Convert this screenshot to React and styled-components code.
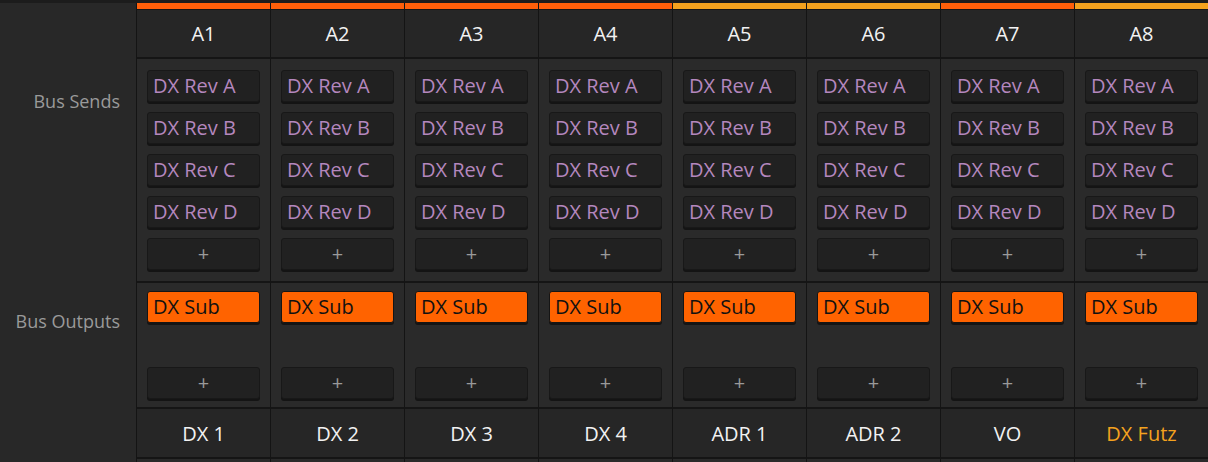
import React from "react";
import styled, { createGlobalStyle } from "styled-components";

const Global = createGlobalStyle`
  html, body { margin: 0; padding: 0; background: #282828; }
  body { font-family: "Open Sans", "Noto Sans", sans-serif; }
`;

const Page = styled.div`
  width: 1208px; height: 462px; display: flex; background: #282828; overflow: hidden;
  border-top: 3px solid #1c1c1c; box-sizing: border-box;
`;
const Labels = styled.div`
  width: 136px; flex: none; display: flex; flex-direction: column;
  border-right: 1px solid #141414;
`;
const Label = styled.div`
  text-align: right; padding-right: 16px;
  color: #9a9a9a; font-size: 18px; line-height: 24px; margin-top: ${p => p.$mt}px;
`;
const Col = styled.div`
  width: 133px; flex: none; display: flex; flex-direction: column;
  border-right: 1px solid #141414; background: #2a2a2a;
`;
const Bar = styled.div`
  height: 6px; background: ${p => p.$c}; border-bottom: 1px solid #151515;
`;
const Head = styled.div`
  height: 47px; display: flex; align-items: center; justify-content: center;
  color: #f2f2f2; font-size: 20px; background: #262626; border-bottom: 2px solid #151515;
`;
const Section = styled.div`
  display: flex; flex-direction: column; gap: 10px; padding: ${p => p.$pad};
  border-bottom: 2px solid #151515;
`;
const Btn = styled.div`
  height: 32px; box-sizing: border-box; border-radius: 3px;
  background: ${p => (p.$on ? "#ff6300" : "#212121")};
  border: 1px solid ${p => (p.$on ? "#151515" : "#181818")};
  box-shadow: 0 2px 0 #141414;
  color: ${p => (p.$on ? "#111" : p.$plus ? "#9a9a9a" : "#b487be")};
  font-size: 20px; line-height: 30px;
  text-align: ${p => (p.$plus ? "center" : "left")}; padding-left: ${p => (p.$plus ? 0 : 5)}px;
  margin-top: ${p => p.$mt || 0}px;
`;
const Name = styled.div`
  height: 48px; display: flex; align-items: center; justify-content: center;
  font-size: 20px; color: ${p => p.$c || "#f2f2f2"}; background: #262626;
  border-bottom: 2px solid #151515;
`;

const O = "#ff5f0a", Y = "#f4a21e";
const cols = [
  ["A1", "DX 1", O], ["A2", "DX 2", O], ["A3", "DX 3", O], ["A4", "DX 4", O],
  ["A5", "ADR 1", Y], ["A6", "ADR 2", Y], ["A7", "VO", O], ["A8", "DX Futz", Y, Y],
];

export default function App() {
  return (
    <>
      <Global />
      <Page>
        <Labels>
          <Label $mt={86}>Bus Sends</Label>
          <Label $mt={196}>Bus Outputs</Label>
        </Labels>
        {cols.map(([a, n, c, nc]) => (
          <Col key={a}>
            <Bar $c={c} />
            <Head>{a}</Head>
            <Section $pad="11px 10px 11px">
              {["A", "B", "C", "D"].map(x => <Btn key={x}>DX Rev {x}</Btn>)}
              <Btn $plus>+</Btn>
            </Section>
            <Section $pad="8px 10px 8px">
              <Btn $on>DX Sub</Btn>
              <Btn $plus $mt={34}>+</Btn>
            </Section>
            <Name $c={nc}>{n}</Name>
          </Col>
        ))}
      </Page>
    </>
  );
}
